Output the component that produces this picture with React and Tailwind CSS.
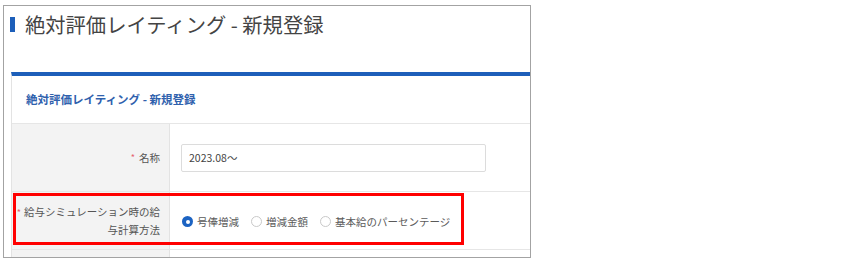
export default function App() {
  const font = { fontFamily: '"Noto Sans CJK JP", "Noto Sans", sans-serif' };

  const Radio = ({ checked, label }) => (
    <label className="flex items-center gap-[4px] text-[10.5px] text-[#5a5a5a]">
      {checked ? (
        <span className="w-[11px] h-[11px] rounded-full bg-[#1c63c2] flex items-center justify-center">
          <span className="w-[4px] h-[4px] rounded-full bg-white" />
        </span>
      ) : (
        <span className="w-[11px] h-[11px] rounded-full border border-[#c9c9c9] bg-white" />
      )}
      <span>{label}</span>
    </label>
  );

  return (
    <div className="w-[849px] h-[264px] bg-white" style={font}>
      <div className="relative ml-[3px] pt-[5px]">
        <div className="relative w-[528px] h-[253px] border border-[#a3a3a3] overflow-hidden">
          {/* page title */}
          <div className="flex items-center h-[26px] mt-[5px] pl-[6px]">
            <span className="w-[5px] h-[15px] bg-[#1d5fba]" />
            <h1 className="ml-[10px] text-[20.3px] leading-none text-[#444] font-normal whitespace-nowrap">
              絶対評価レイティング - 新規登録
            </h1>
          </div>

          {/* card */}
          <div className="ml-[7px] mt-[35px] w-[600px] border-l border-[#e3e3e3] border-t-[4px] border-t-[#1d5fba]">
            <div className="h-[48px] flex items-center pl-[14px] border-b border-[#e6e6e6]">
              <span className="text-[11.5px] font-bold text-[#2f61ad] whitespace-nowrap">
                絶対評価レイティング - 新規登録
              </span>
            </div>

            <div className="flex h-[68px] border-b border-[#e6e6e6]">
              <div className="w-[158px] shrink-0 bg-[#f3f3f3] border-r border-[#e3e3e3] flex items-center justify-end pr-[9px] text-[10.5px] text-[#555]">
                <span className="text-[#e5626f] mr-[4px] text-[9px]">*</span>
                名称
              </div>
              <div className="flex items-center pl-[11px]">
                <div className="w-[305px] h-[28px] border border-[#dcdcdc] rounded-[2px] flex items-center pl-[7px] text-[10.5px] text-[#444]">
                  2023.08～
                </div>
              </div>
            </div>

            <div className="flex h-[58px] border-b border-[#e6e6e6]">
              <div className="w-[158px] shrink-0 bg-[#f3f3f3] border-r border-[#e3e3e3] flex items-center justify-end pr-[9px] text-[10.5px] leading-[17px] text-[#555] text-right">
                <div>
                  <span className="text-[#e5626f] mr-[3px] text-[9px]">*</span>
                  給与シミュレーション時の給
                  <br />
                  与計算方法
                </div>
              </div>
              <div className="flex items-center gap-[12px] pl-[12px] pt-[2px]">
                <Radio checked label="号俸増減" />
                <Radio label="増減金額" />
                <Radio label="基本給のパーセンテージ" />
              </div>
            </div>

            <div className="flex h-[20px]">
              <div className="w-[158px] shrink-0 bg-[#f3f3f3] border-r border-[#e3e3e3]" />
            </div>
          </div>

          {/* annotation */}
          <div className="absolute left-[9px] top-[187px] w-[451px] h-[52px] border-[3px] border-[#ff0000]" />
        </div>
      </div>
    </div>
  );
}
